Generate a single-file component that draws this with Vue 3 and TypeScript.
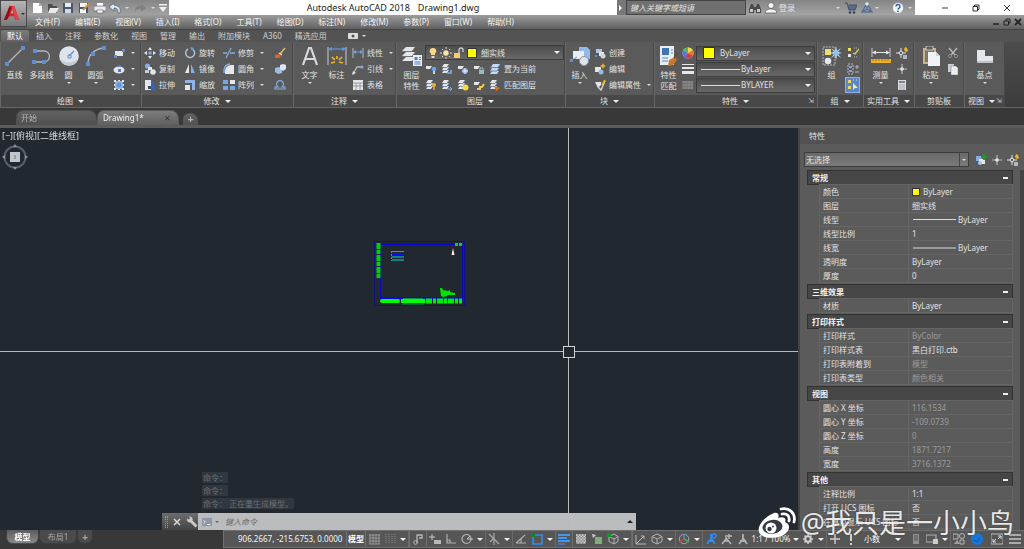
<script setup lang="ts">
import { ref } from 'vue'

interface Small { icon: string; label?: string; arrow?: boolean; active?: boolean }
interface Big { icon: string; label: string[]; arrow?: boolean }
interface Row { name: string; value: string; kind?: 'color' | 'line' | 'weight'; dim?: boolean }
interface Group { title: string; rows: Row[] }
interface StatusItem { icon?: string; arrow?: boolean; sep?: boolean; label: string }

const B = '#86aee2'
const W = '#e4e6ea'
const G = '#b4b8be'
const Y = '#f0b429'

const sheets = (extra: string) =>
  `<path d="M3 1h5L6 4H1zM3 4h5L6 7H1zM3 7h5l-2 3H1z" fill="${W}"/><path d="M1 4.500h5l2-3M1 7.500h5l2-3" fill="none" stroke="#5c7fae" stroke-width=".8"/>${extra}`

const ic: Record<string, string> = {
  line: `<path d="M2 18L18 2" stroke="${G}" stroke-width="1.3"/><path d="M0 16h4v4H0zM16 0h4v4h-4z" fill="#5f8fd0"/>`,
  pline: `<path d="M2 4h10a5.500 5.500 0 0 1 0 11H2" transform="translate(0 1)" fill="none" stroke="${G}" stroke-width="1.300"/><path d="M0 14h4v4H0zM10 14h4v4h-4zM1 3h4v4H1z" fill="#5f8fd0"/>`,
  circle: `<circle cx="10" cy="10" r="9.800" fill="#dfe4ec"/><path d="M1 13a9.500 9.500 0 0 0 18 0a14 14 0 0 1-18 0" fill="#c3cbd8"/><path d="M10 10l5-5" stroke="#5f8fd0" stroke-width="1.200"/><path d="M9 9h3v3H9z" fill="none" stroke="#5f8fd0"/>`,
  arc: `<path d="M2 18C2 9 8 3 18 2" fill="none" stroke="${G}" stroke-width="1.300"/><path d="M0 16h4v4H0zM5 6h4v4H5zM16 0h4v4h-4z" fill="#5f8fd0"/>`,
  rect: `<path d="M2 4h8v5H2z" fill="${W}"/><path d="M1 8h3v3H1zM9 2h3v3H9z" fill="#5f8fd0"/>`,
  ellipse: `<ellipse cx="6" cy="7" rx="5.500" ry="3.500" fill="${W}"/><path d="M5 6h3v3H5zM5 2h3v2H5z" fill="#4f7fc4"/>`,
  hatch: `<path d="M2 2h8v8H2z" fill="#8fb4e8"/><circle cx="6" cy="6" r="2.500" fill="#6a96d6"/><path d="M1 1h2v2H1zM9 1h2v2H9zM1 9h2v2H1zM9 9h2v2H9zM5 1h2v1H5zM5 10h2v1H5zM1 5h1v2H1zM10 5h1v2h-1z" fill="${W}"/>`,
  move: `<path d="M6 0l2 3H4zM6 12l2-3H4zM0 6l3-2v4zM12 6L9 4v4z" fill="${W}"/><path d="M4.500 4.500h3v3h-3z" fill="${B}"/>`,
  rotate: `<path d="M9 2.500A4.500 4.500 0 1 1 4 2" fill="none" stroke="#aebfd8" stroke-width="1.500"/><path d="M6 0l4 1-2 3z" fill="#6f9ad6"/>`,
  trim: `<path d="M0 6h4M7 6h5" stroke="${B}" stroke-width="1.400"/><path d="M3 11L8 1" stroke="${B}" stroke-width="1.200"/>`,
  copy: `<circle cx="3.500" cy="3" r="2.600" fill="${B}"/><path d="M4 4h4v3H4z" fill="${W}"/><circle cx="9" cy="9" r="2.800" fill="${W}"/><path d="M1 7h4v3H1z" fill="#c4cfe0"/>`,
  mirror: `<path d="M5 1v9H1z" fill="${W}"/><path d="M7 1l4 9H7z" fill="${B}"/>`,
  fillet: `<path d="M2 11V8a6 6 0 0 1 6-6h3v9z" fill="${W}"/><path d="M1 10V7a6 6 0 0 1 6-6" fill="none" stroke="${B}" stroke-width="1.400"/>`,
  stretch: `<path d="M1 1h6v10H1z" fill="${W}"/><path d="M7 1h1l4 10H7z" fill="#2e67b8"/><path d="M4 7h3v3H4z" fill="#3b4a5e"/>`,
  scale: `<path d="M1 1h10v10H8V4H1z" fill="#8eb3e4"/><path d="M1 6h5v5H1z" fill="${W}"/>`,
  array: `<path d="M0 1h5v4H0zM0 7h5v4H0zM7 7h5v4H7z" fill="#79a5e3"/><path d="M7 1h5v4H7z" fill="${W}"/>`,
  erase: `<path d="M11 1L6 7" stroke="#e0b070" stroke-width="1.600"/><path d="M1 8l4-1 2 2-2 2H1z" fill="#d9622e"/><path d="M5 6l3 2" stroke="#f2dcb4" stroke-width="1.400"/>`,
  explode: `<path d="M1 5l4-1 3 2v4l-4 1-3-2z" fill="#9dbde8"/><path d="M6 2l3-1 3 1v4l-3 2-3-2z" fill="#dbe6f5"/>`,
  offset: `<path d="M1 10V8h3a3.500 3.500 0 1 1 4 0h3v2z" fill="none" stroke="${B}" stroke-width="1.200"/>`,
  text: `<path d="M3 19L9 2h2l6 17M6 13h8" fill="none" stroke="#d6d8dc" stroke-width="2.200"/>`,
  dim: `<path d="M1 1v18M19 1v18" stroke="${G}" stroke-width="1.200"/><path d="M2 3h16" stroke="#5f93dc" stroke-width="1.200"/><path d="M1 3l4-2v4zM19 3l-4-2v4z" fill="#5f93dc"/><path d="M4 17l4-1M16 17l-4-1M10 10v3M5 11l3 3M15 11l-3 3" stroke="${Y}" stroke-width="1.700"/>`,
  linear: `<path d="M1 1v10M11 1v10" stroke="${G}"/><path d="M2 5h8" stroke="#5f93dc" stroke-width="1.300"/><path d="M1 5l3-2v4zM11 5L8 3v4z" fill="#6fa0e6"/>`,
  leader: `<path d="M1 11l4-7h5" fill="none" stroke="${G}" stroke-width="1.300"/><circle cx="10" cy="4" r="1.600" fill="#7ba6e2"/><path d="M0 12l1-4 3 2z" fill="${W}"/>`,
  table: `<path d="M1 1h10v10H1z" fill="${W}"/><path d="M1 4h10M1 7h10M4 4v7M8 4v7" stroke="#858b94" stroke-width=".8"/>`,
  layers: `<path d="M4 1h9l-3 4H0zM4 6h9l-3 4H0zM4 11h9l-3 4H0z" fill="${W}"/><path d="M0 5.500h10l3-4M0 10.500h10l3-4" fill="none" stroke="#777" stroke-width=".8"/><path d="M11 9h9v11h-9z" fill="#e8eef8"/><path d="M12.500 11h3v3h-3z" fill="#4c7cc4"/><path d="M17 11.500h2M17 13.500h2M12.500 16h6M12.500 18h6" stroke="#4c7cc4"/>`,
  bulb: `<path d="M6 1a3 3 0 0 1 2 5.500V8H4V6.500A3 3 0 0 1 6 1z" fill="#f6d888"/><path d="M4.500 9h3v2h-3z" fill="#d8d8d8"/>`,
  sun: `<circle cx="6" cy="6" r="2.700" fill="#fae7a5"/><path d="M6 0v2M6 10v2M0 6h2M10 6h2M2 2l1.200 1.200M9 9l1.200 1.200M2 10l1.200-1.200M9 3l1.200-1.200" stroke="#e3d8b8"/>`,
  lock: `<path d="M1 6h6v5H1z" fill="#f2cf6a"/><path d="M6 6V3a2 2 0 0 1 4 0v2" fill="none" stroke="#d0d0d0" stroke-width="1.300"/>`,
  ly1: `<path d="M1 3h6l-2 3H1z" fill="${W}"/><circle cx="9" cy="6" r="2.300" fill="#6fa4ea"/><path d="M8 8h2v3H8z" fill="#c8d4e4"/>`,
  ly2: sheets(`<path d="M6 10h4V7" stroke="${B}" stroke-width="1.600" fill="none"/>`),
  ly3: `<path d="M1 3h6l-2 3H1z" fill="${W}"/><circle cx="8" cy="8" r="2.800" fill="#91b9f0"/><path d="M8 5v6M5 8h6" stroke="#fff" stroke-width=".7"/>`,
  ly4: `<path d="M1 3h6l-2 3H1z" fill="${W}"/><path d="M6 7h5v4H6z" fill="#9bbdb7"/><path d="M7 7V5h3v2" fill="none" stroke="${G}"/>`,
  ly5: `<path d="M4 1h7L9 4H2zM3 5h7L8 8H1zM3 8h7l-2 3H1z" fill="#c8d8ee"/><path d="M1 4.500h8l2-3M1 8h7l2-3" fill="none" stroke="#5c8ccc"/>`,
  ly6: sheets(`<circle cx="9" cy="6" r="2" fill="${Y}"/><path d="M8 8h2v3H8z" fill="#db8b2f"/>`),
  ly7: sheets(`<path d="M6 10h5M9 8l2 2-2 2" stroke="${B}" fill="none"/>`),
  ly8: sheets(`<circle cx="8.500" cy="8.500" r="3" fill="#f7d946"/>`),
  ly9: `<path d="M1 3h6l-2 3H1z" fill="${W}"/><path d="M6 8h3l2-3" stroke="#f2c94c" stroke-width="2" fill="none"/><path d="M4 9h4v2H4z" fill="#f2c94c"/>`,
  ly10: sheets(`<path d="M5 7l6 2-4 3z" fill="#d8742a"/>`),
  insert: `<path d="M9 1h8l3 3v9H9z" fill="#93b9e6"/><path d="M3 5h11v8H3z" fill="#e9ecf1"/><circle cx="14" cy="15" r="4.500" fill="#dfe4ea" stroke="#8b95a5"/><path d="M0 13h3v3H0z" fill="#5f8fd0"/><path d="M2 14l5-3" stroke="#5f8fd0"/>`,
  create: `<path d="M2 2h6v4H2z" fill="#aac6ea"/><path d="M5 5h5v4H5z" fill="${W}"/><circle cx="9" cy="9" r="2.500" fill="#cfd6e0"/><path d="M1 8h2v2H1z" fill="#5f8fd0"/>`,
  bedit: `<path d="M1 4h6v5H1z" fill="${W}"/><circle cx="7" cy="9" r="2.500" fill="#9ab9e2"/><path d="M9 0l1 2 2 1-2 1-1 2-1-2-2-1 2-1z" fill="${Y}"/>`,
  attedit: `<path d="M1 3h6v3l-3 3z" fill="${W}"/><path d="M4 8l3 3 4-9" fill="none" stroke="#c9ced6" stroke-width="1.500"/><path d="M8 6l3-5" stroke="${Y}" stroke-width="1.600"/>`,
  matchprop: `<path d="M1 0h14v19H1z" fill="#e9edf4"/><path d="M3 2h7v7H3z" fill="#3f75b8"/><path d="M12 4h2M12 7h2M3 12h6M3 15h6" stroke="#6289bd"/><path d="M10 14l6-3 2 3-4 5-5 1z" fill="#c77a2c"/><path d="M15 12l4-5" stroke="#704a2a" stroke-width="2"/>`,
  wheel: `<circle cx="6" cy="6" r="5.500" fill="#e8e8e8"/><path d="M6 6V.5A5.500 5.500 0 0 1 10.800 3.300z" fill="#f5d44b"/><path d="M6 6l4.800-2.700a5.500 5.500 0 0 1 0 5.500z" fill="#e57a2e"/><path d="M6 6l4.800 2.800A5.500 5.500 0 0 1 6 11.500z" fill="#d23b3b"/><path d="M6 6v5.500A5.500 5.500 0 0 1 1.200 8.800z" fill="#8b4fc0"/><path d="M6 6L1.200 8.800a5.500 5.500 0 0 1 0-5.500z" fill="#3d80d8"/><path d="M6 6L1.200 3.300A5.500 5.500 0 0 1 6 .5z" fill="#4fb35a"/>`,
  weights: `<path d="M0 1.500h12" stroke="${W}"/><path d="M0 5h12" stroke="${W}" stroke-width="2"/><path d="M0 9.500h12" stroke="${W}" stroke-width="3"/>`,
  ltype: `<path d="M1 2h10v8H1z" fill="#777"/><path d="M0 3h12M0 6h12M0 9h12" stroke="#989898" stroke-dasharray="2 1"/>`,
  group: `<path d="M1 1h12v18H1z" fill="none" stroke="${G}" stroke-dasharray="2 1"/><path d="M3 3h6v6H3z" fill="#f1dc6e"/><circle cx="6" cy="15" r="3.300" fill="#e2e7ee"/><path d="M14 0l1 5 4-3-3 4 4 1-4 1 3 4-4-3-1 5-1-5-4 3 3-4-5-1 5-1-3-4 4 3z" fill="#bfe0fb"/><circle cx="14" cy="7" r="2.500" fill="#8cc4f5"/>`,
  ungroup: `<path d="M1 1h3v3H1z" fill="#f1dc6e"/><path d="M1 7h3v3H1z" fill="${W}"/><path d="M7 1h4M7 10h3" stroke="${G}" stroke-dasharray="1 1"/><path d="M6 6l2 1 4-5" stroke="#e8cf4c" fill="none" stroke-width="1.300"/>`,
  gedit: `<path d="M1 1h5v10H1z" fill="none" stroke="${G}" stroke-dasharray="2 1"/><path d="M2 3h3v2H2zM2 7h3v2H2z" fill="#7ba6e2"/><path d="M8 4h4M10 2v4M8 9h4" stroke="${G}"/>`,
  gsel: `<path d="M1 1h3v3H1zM1 7h3v3H1z" fill="#e2d56c"/><path d="M6 1h1M9 1h1" stroke="#cde"/><path d="M6 4l5 5-3 0-2 2z" fill="#f4e9a0"/>`,
  measure: `<path d="M1 2v9M19 2v9" stroke="${G}" stroke-width="1.200"/><path d="M2 6.500h16" stroke="${W}"/><path d="M1 6.500l4-2v4zM19 6.500l-4-2v4z" fill="${W}"/><path d="M0 13h20v4H0z" fill="#edb024"/><path d="M2 13v2M5 13v2M8 13v2M11 13v2M14 13v2M17 13v2" stroke="#93660a" stroke-width=".7"/>`,
  qselect: `<path d="M5 1v10M0 6h10" stroke="${W}"/><circle cx="5" cy="6" r="1.800" fill="#5b5b5b" stroke="${W}"/><path d="M9 0l2 1 1 3-2 1-2-2z" fill="${Y}"/><path d="M7 8h4v4H7z" fill="${G}"/>`,
  point: `<path d="M6 1v10M1 6h10" stroke="${G}" stroke-width="1.200"/><circle cx="6" cy="6" r="1.800" fill="${W}"/>`,
  calc: `<path d="M2 1h8v10H2z" fill="#d9dce0"/><path d="M3 2h6v2H3z" fill="#7c8590"/><path d="M3 6h6M3 8h6M3 10h6" stroke="#8a8f97" stroke-width=".7"/>`,
  paste: `<path d="M2 2h13v16H2z" fill="#c9b28c"/><path d="M4 4h9v12H4z" fill="#7d766a"/><path d="M5 0h7v4H5z" fill="#5e5e5e" stroke="#ddd" stroke-width=".8"/><path d="M7 6h8l4 4v10H7z" fill="#f0f2f5"/><path d="M15 6v4h4" fill="#cfd4dc"/>`,
  cut: `<path d="M2 1l6 7M10 1L4 8" stroke="${G}" stroke-width="1.400"/><circle cx="3" cy="9" r="1.600" fill="none" stroke="#8c8c8c"/><circle cx="9" cy="9" r="1.600" fill="none" stroke="#8c8c8c"/>`,
  cclip: `<path d="M1 1h6v8H1z" fill="#c9ccd2"/><path d="M4 3h5l2 2v7H4z" fill="#eceef1" stroke="#777" stroke-width=".5"/>`,
  base: `<path d="M2 4h8v6h8v7H2z" fill="#e4e6ea"/><path d="M2 15h16v2H2z" fill="#bfc3c9"/>`,
  new: `<path d="M2 1h6l3 3v7H2z" fill="#fff"/><path d="M8 1v3h3" fill="#aaa"/>`,
  open: `<path d="M1 2h4l1 2h4v7H1z" fill="#4d4d4d"/><path d="M3 6h9l-3 5H1z" fill="#e9ecef"/>`,
  save: `<path d="M1 1h10v10H1z" fill="#46566b"/><path d="M3 1h6v4H3z" fill="#e8ecf2"/><path d="M3 7h6v4H3z" fill="#d4dae3"/>`,
  saveas: `<path d="M1 1h9v10H1z" fill="#46566b"/><path d="M2 1h7v4H2z" fill="#f4f4f4"/><path d="M2 7h6v4H2z" fill="#fff"/><path d="M5 8l6-6" stroke="#e08a2c" stroke-width="1.800"/>`,
  print: `<path d="M3 1h6v4H3z" fill="#fff"/><path d="M0 4h12v5H0z" fill="#e9ebee" stroke="#555" stroke-width=".6"/><path d="M3 8h6v3H3z" fill="#fff" stroke="#555" stroke-width=".6"/>`,
  undo: `<path d="M5 1L0 5l5 4V6c3 0 4 1 4 5h2c1-5-1-7-6-8z" fill="#dfe8f5" stroke="#4f5d72" stroke-width=".7"/>`,
  redo: `<path d="M7 2l5 4-5 4V7c-4 0-5 0-6 3-1-4 2-6 6-6z" fill="#808080"/>`,
  more: `<path d="M2 2h8v1.500H2zM2 5h8L6 10z" fill="#f2f2f2"/>`,
  bino: `<path d="M2 2h2l1 3v6H0V7zM8 2h2l2 5v4H7V5zM5 5h2v3H5z" fill="#4a4a4a"/><path d="M1 7h3v3H1zM8 7h3v3H8z" fill="#ccc"/>`,
  user: `<circle cx="6" cy="3.500" r="3" fill="#f4f4f4" stroke="#555" stroke-width=".7"/><path d="M0 11c1-4 3-3 4-4h4c1 1 3 0 4 4z" fill="#f4f4f4" stroke="#555" stroke-width=".7"/>`,
  cart: `<path d="M0 1h2l2 7h6l2-5H4" fill="#5b6a86" stroke="#40506c" stroke-width="1"/><circle cx="5" cy="10.500" r="1.300" fill="#34425c"/><circle cx="9" cy="10.500" r="1.300" fill="#34425c"/>`,
  a360: `<path d="M6 1l5 9H1zM6 1v6M1 10l5-3 5 3" fill="none" stroke="#55709c" stroke-width="1.300"/><circle cx="6" cy="2" r="1.800" fill="#dfe7f2"/>`,
  help: `<circle cx="6" cy="6" r="5.500" fill="#f2f5fa" stroke="#888" stroke-width=".6"/><path d="M4 4.500a2 2 0 1 1 2.800 1.800Q6 6.700 6 7.500" fill="none" stroke="#2c5ca8" stroke-width="1.400"/><circle cx="6" cy="9.300" r=".9" fill="#2c5ca8"/>`,
  wrench: `<path d="M1 2.500l2 1 1-1-1-2a3 3 0 0 1 3.500 4L11.500 9.500l-2 2-5-5A3 3 0 0 1 1 2.500z" fill="#c9c9c9"/>`,
  prompt: `<path d="M0 1h12v10H0z" fill="#8d97a6"/><path d="M2 4l2 2-2 2M6 9h4" stroke="#fff" fill="none"/>`,
  addsel: `<path d="M1 2h6v5H1z" fill="#86aee2"/><path d="M4 5h6v5H4z" fill="${W}"/><circle cx="5" cy="9" r="2" fill="#a9c6ec"/><path d="M9 0v6M6 3h6" stroke="#1e9a2a" stroke-width="1.800"/>`,
  grid: `<path d="M2 1v10M5 1v10M8 1v10M11 1v10M1 2h11M1 5h11M1 8h11M1 11h11" stroke="#a4a4a4" stroke-width=".8"/>`,
  snap: `<path d="M2 1v10M5 1v10M8 1v10M11 1v10" stroke="#909090" stroke-dasharray="1 1"/>`,
  infer: `<path d="M5 10V2h5v3H7" fill="none" stroke="#b8b8b8" stroke-width="1.300"/><circle cx="3.500" cy="9.500" r="1.800" fill="none" stroke="#b8b8b8"/>`,
  dyn: `<path d="M3 1v6M0 4h6" stroke="#c8c8c8"/><path d="M5 7h7v4H5z" fill="#b8b8b8"/>`,
  ortho: `<path d="M2 1v9h9M2 7h3v3" fill="none" stroke="#b0b0b0" stroke-width="1.200"/>`,
  polar: `<circle cx="5.500" cy="6" r="4.500" fill="none" stroke="#b8b8b8" stroke-width="1.200"/><path d="M6 6h6M6 6l3-3" stroke="#c8c8c8"/>`,
  iso: `<path d="M1 1l10 10M6 0v12M2 9l3-3" stroke="#aaa" stroke-width="1.200"/>`,
  otrack: `<path d="M1 10L10 2M1 10h10M6 6v4" stroke="#b0b0b0" stroke-width="1.100" fill="none"/>`,
  osnap: `<path d="M2 2h9v9H2z" fill="none" stroke="#2f8cf0" stroke-width="1.600"/><path d="M0 0h4v4H0z" fill="#0a8a22"/>`,
  lw: `<path d="M0 2h12M0 5h9M0 8h12" stroke="#3f97f4" stroke-width="1.800"/><path d="M0 11h7" stroke="#3f97f4"/>`,
  transp: `<path d="M1 1h10v10H1z" fill="#8a8a8a"/><path d="M1 2h10M1 5h10M1 8h10" stroke="#ccc" stroke-dasharray="1.500 1.500" stroke-width="1.500"/><path d="M2.500 3.500h9M2.500 6.500h9M2.500 9.500h9" stroke="#ccc" stroke-dasharray="1.500 1.500" stroke-width="1.500"/>`,
  cycle: `<path d="M4 4h7v7H4z" fill="#83ad78"/><path d="M1 1l4 1-3 3z" fill="#ccc"/>`,
  cube: `<path d="M6 1l5 2.500v5L6 11 1 8.500v-5zM1 3.500L6 6l5-2.500M6 6v5" fill="none" stroke="#b4b4b4"/>`,
  osnap3: `<path d="M7 1l4 2.500v5L7 11 2 8.500v-5zM2 3.500L7 6l4-2.500M7 6v5" fill="none" stroke="#b4b4b4"/><path d="M0 0h4v4H0z" fill="#0a9a22"/>`,
  ucs: `<path d="M1 2v9h10M1 11l8-8M6 3h3v3" fill="none" stroke="#b8b8b8"/>`,
  gizmo: `<circle cx="6" cy="6" r="4.700" fill="none" stroke="#a8a8a8"/><path d="M6 1v5" stroke="#5a8ddd" stroke-width="1.500"/><path d="M6 6l-5 3" stroke="#c84343" stroke-width="1.500"/><path d="M6 6l5 3" stroke="#48a84e" stroke-width="1.500"/>`,
  anno: `<path d="M6 1v5l-4 5M6 5l4 6M3 8h6" fill="none" stroke="#2f8cf0" stroke-width="1.900"/><circle cx="9" cy="3" r="2" fill="none" stroke="#2f8cf0" stroke-width="1.400"/>`,
  anno2: `<path d="M5 2v4l-4 5M5 5l5 6M3 8h5M8 1v5M6 3h5" fill="none" stroke="#b6b6b6" stroke-width="1.400"/>`,
  anno3: `<path d="M6 1v5l-4 5M6 5l4 6M3 8h6" fill="none" stroke="#b0b0b0" stroke-width="1.800"/>`,
  gear: `<circle cx="6" cy="6" r="2.800" fill="none" stroke="#d0d0d0" stroke-width="2"/><path d="M6 1v2M6 9v2M1 6h2M9 6h2M2.500 2.500l1.500 1.500M8 8l1.500 1.500M9.500 2.500L8 4M4 8L2.500 9.500" stroke="#d0d0d0" stroke-width="1.500"/>`,
  plus: `<path d="M6 1v10M1 6h10" stroke="#cfcfcf" stroke-width="1.400"/>`,
  excl: `<path d="M6 1v7M6 10v2" stroke="#cfcfcf" stroke-width="2"/>`,
  quick: `<path d="M3 1h6v10H3z" fill="#8f8f8f"/><path d="M4 3h4M4 5h4M4 7h4" stroke="#555"/>`,
  lockui: `<path d="M0 2h10v7H0z" fill="none" stroke="#b0b0b0" stroke-width="1.200"/><path d="M7 6h5v5H7z" fill="#ccc"/>`,
  isolate: `<path d="M0 1h5v5H0zM7 7h4v4H7z" fill="none" stroke="#b8b8b8"/><circle cx="9" cy="3" r="2.500" fill="none" stroke="#b8b8b8"/><path d="M4 7l3 4H1z" fill="#a0a0a0"/>`,
  perf: `<circle cx="6" cy="6" r="6" fill="#1677d8"/><path d="M3 7l3 2 3-4" stroke="#0d4f9c" fill="none"/>`,
  clean: `<path d="M0 1h12v10H0z" fill="none" stroke="#b8b8b8"/><path d="M2 9V6M2 9h3M2 9l3-3M10 3v3M10 3H7M10 3L7 6" stroke="#ddd" fill="none"/>`,
  menu: `<path d="M0 2h12M0 6h12M0 10h12" stroke="#c8c8c8" stroke-width="1.400"/>`,
}

const quick = ['new', 'open', 'save', 'saveas', 'print', 'undo']
const menus = ['文件(F)', '编辑(E)', '视图(V)', '插入(I)', '格式(O)', '工具(T)', '绘图(D)', '标注(N)', '修改(M)', '参数(P)', '窗口(W)', '帮助(H)']
const tabs = ['默认', '插入', '注释', '参数化', '视图', '管理', '输出', '附加模块', 'A360', '精选应用']
const activeTab = ref('默认')

const drawBig: Big[] = [
  { icon: 'line', label: ['直线'] }, { icon: 'pline', label: ['多段线'] },
  { icon: 'circle', label: ['圆'], arrow: true }, { icon: 'arc', label: ['圆弧'], arrow: true },
]
const drawSmall: Small[] = [{ icon: 'rect', arrow: true }, { icon: 'ellipse', arrow: true }, { icon: 'hatch', arrow: true }]
const modify: Small[] = [
  { icon: 'move', label: '移动' }, { icon: 'copy', label: '复制' }, { icon: 'stretch', label: '拉伸' },
  { icon: 'rotate', label: '旋转' }, { icon: 'mirror', label: '镜像' }, { icon: 'scale', label: '缩放' },
  { icon: 'trim', label: '修剪', arrow: true }, { icon: 'fillet', label: '圆角', arrow: true }, { icon: 'array', label: '阵列', arrow: true },
  { icon: 'erase' }, { icon: 'explode' }, { icon: 'offset' },
]
const annoBig: Big[] = [{ icon: 'text', label: ['文字'], arrow: true }, { icon: 'dim', label: ['标注'] }]
const annoSmall: Small[] = [{ icon: 'linear', label: '线性', arrow: true }, { icon: 'leader', label: '引线', arrow: true }, { icon: 'table', label: '表格' }]
const layerRows: Small[][] = [
  [{ icon: 'ly1' }, { icon: 'ly2' }, { icon: 'ly3' }, { icon: 'ly4' }, { icon: 'ly5', label: '置为当前' }],
  [{ icon: 'ly6' }, { icon: 'ly7' }, { icon: 'ly8' }, { icon: 'ly9' }, { icon: 'ly10', label: '匹配图层' }],
]
const blockSmall: Small[] = [{ icon: 'create', label: '创建' }, { icon: 'bedit', label: '编辑' }, { icon: 'attedit', label: '编辑属性', arrow: true }]
const groupSmall: Small[] = [{ icon: 'ungroup' }, { icon: 'gedit' }, { icon: 'gsel', active: true }]
const utilSmall: Small[] = [{ icon: 'qselect' }, { icon: 'point' }, { icon: 'calc' }]
const clipSmall: Small[] = [{ icon: 'cut' }, { icon: 'cclip' }]

const groups: Group[] = [
  { title: '常规', rows: [
    { name: '颜色', value: 'ByLayer', kind: 'color' }, { name: '图层', value: '细实线' },
    { name: '线型', value: 'ByLayer', kind: 'line' }, { name: '线型比例', value: '1' },
    { name: '线宽', value: 'ByLayer', kind: 'weight' }, { name: '透明度', value: 'ByLayer' }, { name: '厚度', value: '0' },
  ] },
  { title: '三维效果', rows: [{ name: '材质', value: 'ByLayer' }] },
  { title: '打印样式', rows: [
    { name: '打印样式', value: 'ByColor', dim: true }, { name: '打印样式表', value: '黑白打印.ctb' },
    { name: '打印表附着到', value: '模型', dim: true }, { name: '打印表类型', value: '颜色相关', dim: true },
  ] },
  { title: '视图', rows: [
    { name: '圆心 X 坐标', value: '116.1534', dim: true }, { name: '圆心 Y 坐标', value: '-109.0739', dim: true },
    { name: '圆心 Z 坐标', value: '0', dim: true }, { name: '高度', value: '1871.7217', dim: true }, { name: '宽度', value: '3716.1372', dim: true },
  ] },
  { title: '其他', rows: [
    { name: '注释比例', value: '1:1' }, { name: '打开 UCS 图标', value: '否' }, { name: '在原点显示 UCS 图标', value: '否' },
  ] },
]

const arrow: StatusItem = { arrow: true, label: '更多' }
const status: StatusItem[] = [
  { icon: 'grid', label: '栅格' }, { icon: 'snap', label: '捕捉' }, arrow,
  { icon: 'infer', label: '推断约束', sep: true }, { icon: 'dyn', label: '动态输入', sep: true },
  { icon: 'ortho', label: '正交' }, { icon: 'polar', label: '极轴' }, arrow,
  { icon: 'iso', label: '等轴测' }, arrow, { icon: 'otrack', label: '对象追踪' },
  { icon: 'osnap', label: '对象捕捉' }, arrow, { icon: 'lw', label: '线宽' },
  { icon: 'transp', label: '透明度', sep: true }, { icon: 'cycle', label: '选择循环' },
  { icon: 'osnap3', label: '三维捕捉' }, arrow, { icon: 'ucs', label: '动态 UCS', sep: true },
  { icon: 'cube', label: '选择过滤' }, arrow, { icon: 'gizmo', label: '小控件' }, arrow,
  { icon: 'anno', label: '注释可见性' }, { icon: 'anno2', label: '自动缩放' }, { icon: 'anno3', label: '注释比例' },
]
const search = ref('')
const command = ref('')
</script>

<template>
  <div class="app">
    <header class="head">
      <button class="logo" aria-label="应用程序菜单">
        <svg class="mark" viewBox="0 0 18 18">
          <path d="M1 16L7 1h5l5 15h-4l-1-4H7l-3 4z" fill="#d3232b" />
          <path d="M1 16L7 1l2 1-3 10-2 4z" fill="#8e1118" />
          <path d="M8 9l2-5 1 5z" fill="#a9a9a9" />
          <path d="M12 1l5 15h-3L9 2z" fill="#e9424a" />
        </svg>
        <i class="tri dark"></i>
      </button>
      <div class="titlebar">
        <div class="quick">
          <button v-for="q in quick" :key="q" :aria-label="q"><svg class="i12" viewBox="0 0 12 12" v-html="ic[q]"></svg></button>
          <i class="tri"></i>
          <button aria-label="redo" class="redo"><svg class="i12" viewBox="0 0 12 12" v-html="ic.redo"></svg></button>
          <i class="tri"></i>
          <button aria-label="自定义"><svg class="i12" viewBox="0 0 12 12" v-html="ic.more"></svg></button>
        </div>
        <h1 class="title"><span>Autodesk AutoCAD 2018</span><span>Drawing1.dwg</span></h1>
        <div class="info">
          <button class="expand" aria-label="展开"><i class="tri right"></i></button>
          <input v-model="search" class="search" type="text" placeholder="键入关键字或短语" aria-label="搜索">
          <button aria-label="查找"><svg class="i12" viewBox="0 0 12 12" v-html="ic.bino"></svg></button>
          <button class="login"><svg class="i12" viewBox="0 0 12 12" v-html="ic.user"></svg>登录</button>
          <i class="tri"></i>
          <button aria-label="商店"><svg class="i12" viewBox="0 0 12 12" v-html="ic.cart"></svg></button>
          <button aria-label="A360"><svg class="i12" viewBox="0 0 12 12" v-html="ic.a360"></svg></button>
          <i class="tri"></i>
          <button aria-label="帮助" class="help"><svg class="i12" viewBox="0 0 12 12" v-html="ic.help"></svg></button>
          <i class="tri"></i>
        </div>
        <div class="window">
          <button aria-label="最小化"><svg class="i8" viewBox="0 0 8 8"><path d="M1 4h6" stroke="#333" /></svg></button>
          <button aria-label="还原"><svg class="i8" viewBox="0 0 8 8"><path d="M1 2.500h4.500V7H1zM2.500 2.500V1H7v4.500H5.500" fill="none" stroke="#333" /></svg></button>
          <button aria-label="关闭"><svg class="i8" viewBox="0 0 8 8"><path d="M1 1l6 6M7 1L1 7" stroke="#333" /></svg></button>
        </div>
      </div>
      <nav class="menubar">
        <button v-for="m in menus" :key="m">{{ m }}</button>
        <span class="docs">
          <button aria-label="最小化文档"><svg class="i8" viewBox="0 0 8 8"><path d="M1 6h6" stroke="#222" stroke-width="1.500" /></svg></button>
          <button aria-label="还原文档"><svg class="i8" viewBox="0 0 8 8"><path d="M1 3h4.500v4H1zM3 3V1h4v4H5.500" fill="none" stroke="#222" /></svg></button>
          <button aria-label="关闭文档"><svg class="i8" viewBox="0 0 8 8"><path d="M1 1l6 6M7 1L1 7" stroke="#222" stroke-width="1.800" /></svg></button>
        </span>
      </nav>
    </header>

    <nav class="tabs">
      <button v-for="t in tabs" :key="t" :class="{ on: t === activeTab }" @click="activeTab = t">{{ t }}</button>
      <button class="cam" aria-label="最小化功能区"><svg viewBox="0 0 10 6"><rect width="10" height="6" rx="1" fill="#ddd" /><circle cx="5" cy="3" r="1.500" fill="#555" /></svg><i class="tri"></i></button>
    </nav>

    <div class="ribbon">
      <section class="panel p-draw">
        <div class="body">
          <button v-for="b in drawBig" :key="b.icon" class="big"><svg viewBox="0 0 20 20" v-html="ic[b.icon]"></svg><span v-for="l in b.label" :key="l">{{ l }}</span><i v-if="b.arrow" class="tri"></i></button>
          <div class="col"><button v-for="s in drawSmall" :key="s.icon" class="small" :aria-label="s.icon"><svg class="i12" viewBox="0 0 12 12" v-html="ic[s.icon]"></svg><i class="tri"></i></button></div>
        </div>
        <footer>绘图<i class="tri cap"></i></footer>
      </section>
      <section class="panel p-modify">
        <div class="body">
          <div class="cols"><button v-for="s in modify" :key="s.icon" class="small" :aria-label="s.icon"><svg class="i12" viewBox="0 0 12 12" v-html="ic[s.icon]"></svg><span v-if="s.label">{{ s.label }}</span><i v-if="s.arrow" class="tri"></i></button></div>
        </div>
        <footer>修改<i class="tri cap"></i></footer>
      </section>
      <section class="panel p-anno">
        <div class="body">
          <button v-for="b in annoBig" :key="b.icon" class="big"><svg viewBox="0 0 20 20" v-html="ic[b.icon]"></svg><span v-for="l in b.label" :key="l">{{ l }}</span><i v-if="b.arrow" class="tri"></i></button>
          <div class="col"><button v-for="s in annoSmall" :key="s.icon" class="small"><svg class="i12" viewBox="0 0 12 12" v-html="ic[s.icon]"></svg><span>{{ s.label }}</span><i v-if="s.arrow" class="tri"></i></button></div>
        </div>
        <footer>注释<i class="tri cap"></i></footer>
      </section>
      <section class="panel p-layer">
        <div class="body">
          <button class="big"><svg viewBox="0 0 20 20" v-html="ic.layers"></svg><span>图层</span><span>特性</span></button>
          <div class="col grow">
            <div class="combo">
              <svg v-for="n in ['bulb', 'sun', 'lock']" :key="n" class="i12" viewBox="0 0 12 12" v-html="ic[n]"></svg>
              <b class="swatch"></b>
              <select aria-label="当前图层"><option>细实线</option></select><i class="tri cap"></i>
            </div>
            <div v-for="(r, i) in layerRows" :key="i" class="line"><button v-for="s in r" :key="s.icon" class="small" :aria-label="s.label || s.icon"><svg class="i12" viewBox="0 0 12 12" v-html="ic[s.icon]"></svg><span v-if="s.label">{{ s.label }}</span></button></div>
          </div>
        </div>
        <footer>图层<i class="tri cap"></i></footer>
      </section>
      <section class="panel p-block">
        <div class="body">
          <button class="big"><svg viewBox="0 0 20 20" v-html="ic.insert"></svg><span>插入</span><i class="tri"></i></button>
          <div class="col"><button v-for="s in blockSmall" :key="s.icon" class="small"><svg class="i12" viewBox="0 0 12 12" v-html="ic[s.icon]"></svg><span>{{ s.label }}</span><i v-if="s.arrow" class="tri"></i></button></div>
        </div>
        <footer>块<i class="tri cap"></i></footer>
      </section>
      <section class="panel p-prop">
        <div class="body">
          <button class="big"><svg viewBox="0 0 20 20" v-html="ic.matchprop"></svg><span>特性</span><span>匹配</span></button>
          <div class="col grow">
            <div class="proprow"><svg class="i12" viewBox="0 0 12 12" v-html="ic.wheel"></svg><div class="combo"><b class="swatch"></b><select aria-label="对象颜色"><option>ByLayer</option></select><i class="tri cap"></i></div></div>
            <div class="proprow"><svg class="i12" viewBox="0 0 12 12" v-html="ic.weights"></svg><div class="combo"><b class="rule"></b><select aria-label="线宽"><option>ByLayer</option></select><i class="tri cap"></i></div></div>
            <div class="proprow"><svg class="i12" viewBox="0 0 12 12" v-html="ic.ltype"></svg><div class="combo"><b class="rule"></b><select aria-label="线型"><option>BYLAYER</option></select><i class="tri cap"></i></div></div>
          </div>
        </div>
        <footer>特性<i class="tri cap"></i><span class="launch">⇲</span></footer>
      </section>
      <section class="panel p-group">
        <div class="body">
          <button class="big"><svg viewBox="0 0 20 20" v-html="ic.group"></svg><span>组</span></button>
          <div class="col"><button v-for="s in groupSmall" :key="s.icon" class="small" :class="{ active: s.active }" :aria-label="s.icon"><svg class="i12" viewBox="0 0 12 12" v-html="ic[s.icon]"></svg></button></div>
        </div>
        <footer>组<i class="tri cap"></i></footer>
      </section>
      <section class="panel p-util">
        <div class="body">
          <button class="big"><svg viewBox="0 0 20 20" v-html="ic.measure"></svg><span>测量</span><i class="tri"></i></button>
          <div class="col"><button v-for="s in utilSmall" :key="s.icon" class="small" :aria-label="s.icon"><svg class="i12" viewBox="0 0 12 12" v-html="ic[s.icon]"></svg></button></div>
        </div>
        <footer>实用工具<i class="tri cap"></i></footer>
      </section>
      <section class="panel p-clip">
        <div class="body">
          <button class="big"><svg viewBox="0 0 20 20" v-html="ic.paste"></svg><span>粘贴</span><i class="tri"></i></button>
          <div class="col"><button v-for="s in clipSmall" :key="s.icon" class="small" :aria-label="s.icon"><svg class="i12" viewBox="0 0 12 12" v-html="ic[s.icon]"></svg></button></div>
        </div>
        <footer>剪贴板</footer>
      </section>
      <section class="panel p-view">
        <div class="body">
          <button class="big"><svg viewBox="0 0 20 20" v-html="ic.base"></svg><span>基点</span><i class="tri"></i></button>
        </div>
        <footer>视图<i class="tri cap"></i><span class="launch">⇲</span></footer>
      </section>
    </div>

    <div class="files">
      <button class="file">开始</button>
      <button class="file on"><span>Drawing1*</span><span class="x">✕</span></button>
      <button class="file add" aria-label="新图形">+</button>
    </div>

    <main class="main">
      <div class="canvas">
        <p class="viewlabel">[−][俯视][二维线框]</p>
        <svg class="viewcube" viewBox="0 0 26 26">
          <circle cx="13" cy="13" r="10.500" fill="none" stroke="#57606c" stroke-width="2" />
          <path d="M13 0l2 3h-4zM13 26l2-3h-4zM0 13l3-2v4zM26 13l-3-2v4z" fill="#8d949c" />
          <path d="M8 8h10v10H8z" fill="#c2c5c9" /><path d="M13 11v4" stroke="#777" />
        </svg>
        <svg class="drawing" viewBox="0 0 92 66">
          <path d="M.5.5h90v64H.5z" fill="none" stroke="#10108c" />
          <path d="M7 3h82" stroke="#0a0ad0" stroke-width="2" /><path d="M88.500 3v57M6.500 3v57" stroke="#0a0ac0" />
          <path d="M7 57h82" stroke="#0a0ae0" stroke-width="2" />
          <path d="M4.500 2v36" stroke="#00d000" stroke-width="4" stroke-dasharray="6 1 4 1" />
          <path d="M81 3.500h8" stroke="#00e000" stroke-width="3" stroke-dasharray="3 1" />
          <path d="M17 10.500h13" stroke="#8c8c30" /><path d="M18 13h12" stroke="#1010f0" stroke-width="2" />
          <path d="M18 16h12M18 19h12" stroke="#129a9a" stroke-width="1.500" /><path d="M17.500 10v10" stroke="#18b830" stroke-dasharray="2 1" />
          <path d="M79 7l1.500 7h-3z" fill="#f2f2f2" /><path d="M79 7v2" stroke="#c02020" />
          <path d="M66 47h2l1 2 5 1 2-1v2l5 1v2h-7l-1 1-4 1-2-1z" fill="#00e400" />
          <path d="M8 60h16" stroke="#00ff00" stroke-width="4" stroke-linecap="round" />
          <path d="M27 60h24" stroke="#00ff00" stroke-width="4" /><path d="M29 57.500h20M28 63h22" stroke="#068a50" />
          <path d="M52 60h36" stroke="#00ee00" stroke-width="5" stroke-dasharray="6 1 3 1" />
        </svg>
        <i class="cross v"></i><i class="cross h"></i><i class="pick"></i>
        <div class="console">
          <div class="history"><span>命令：</span><span>命令：</span><span>命令： 正在重生成模型。</span></div>
          <div class="cmd">
            <div class="grip">
              <i class="dots"></i>
              <button aria-label="关闭命令行"><svg class="i8" viewBox="0 0 8 8"><path d="M1 1l6 6M7 1L1 7" stroke="#d8d8d8" stroke-width="1.500" /></svg></button>
              <button aria-label="自定义"><svg class="i12" viewBox="0 0 12 12" v-html="ic.wrench"></svg></button>
            </div>
            <svg class="i12 pr" viewBox="0 0 12 12" v-html="ic.prompt"></svg><i class="tri mid"></i>
            <input v-model="command" type="text" placeholder="键入命令" aria-label="命令">
            <i class="tri up"></i>
          </div>
        </div>
      </div>
      <aside class="palette">
        <h2>特性</h2>
        <div class="pick-row">
          <div class="combo"><select aria-label="选择对象"><option>无选择</option></select><span class="drop"><i class="tri"></i></span></div>
          <button v-for="n in ['addsel', 'point', 'qselect']" :key="n" :aria-label="n"><svg class="i12" viewBox="0 0 12 12" v-html="ic[n]"></svg></button>
        </div>
        <div class="groups">
          <section v-for="g in groups" :key="g.title">
            <h3>{{ g.title }}<button :aria-label="'折叠' + g.title"></button></h3>
            <table><tbody>
              <tr v-for="r in g.rows" :key="r.name" :class="{ dim: r.dim }">
                <th scope="row">{{ r.name }}</th>
                <td><div><b v-if="r.kind === 'color'" class="swatch"></b><b v-else-if="r.kind" class="rule" :class="r.kind"></b>{{ r.value }}</div></td>
              </tr>
            </tbody></table>
          </section>
        </div>
      </aside>
    </main>

    <div class="bottom">
      <div class="layouts">
        <button class="lay on">模型</button><button class="lay">布局1</button><button class="lay add" aria-label="新建布局">+</button>
      </div>
      <div class="status">
        <span class="coords">906.2667, -215.6753, 0.0000</span>
        <button class="model">模型</button>
        <button v-for="(s, i) in status" :key="i" :class="[s.arrow ? 'more' : 'tool', { sep: s.sep }]" :aria-label="s.label"><i v-if="s.arrow" class="tri cap"></i><svg v-else class="i12" viewBox="0 0 12 12" v-html="ic[s.icon!]"></svg></button>
        <button class="scale">1:1 / 100%<i class="tri cap"></i></button>
        <button class="tool" aria-label="工作空间"><svg class="i12" viewBox="0 0 12 12" v-html="ic.gear"></svg></button>
        <button class="more" aria-label="更多"><i class="tri cap"></i></button>
        <button class="tool" aria-label="注释监视器"><svg class="i12" viewBox="0 0 12 12" v-html="ic.plus"></svg></button>
        <button class="tool" aria-label="单位"><svg class="i12" viewBox="0 0 12 12" v-html="ic.excl"></svg></button>
        <div class="units"><select aria-label="图形单位"><option>小数</option></select><i class="tri cap"></i></div>
        <button class="tool" aria-label="快捷特性"><svg class="i12" viewBox="0 0 12 12" v-html="ic.quick"></svg></button>
        <button class="tool" aria-label="锁定用户界面"><svg class="i12" viewBox="0 0 12 12" v-html="ic.lockui"></svg></button>
        <button class="more" aria-label="更多"><i class="tri cap"></i></button>
        <button class="tool" aria-label="隔离对象"><svg class="i12" viewBox="0 0 12 12" v-html="ic.isolate"></svg></button>
        <button class="tool wide" aria-label="图形性能"><svg class="i12" viewBox="0 0 12 12" v-html="ic.perf"></svg></button>
        <button class="tool wide" aria-label="全屏显示"><svg class="i12" viewBox="0 0 12 12" v-html="ic.clean"></svg></button>
        <button class="tool" aria-label="自定义"><svg class="i12" viewBox="0 0 12 12" v-html="ic.menu"></svg></button>
      </div>
    </div>

    <div class="mark-line">
      <svg viewBox="0 0 40 34">
        <path d="M15 8c5-3 8 0 6 4 5-2 9 0 7 4 5 2 5 6 2 10-5 6-19 8-26 3C-2 24 4 13 15 8z" fill="#fff" />
        <ellipse cx="15.500" cy="21" rx="10" ry="7" fill="#343a41" transform="rotate(-8 15 21)" />
        <circle cx="14" cy="22" r="5.500" fill="#fff" /><circle cx="12.500" cy="23" r="2.200" fill="#343a41" /><circle cx="16" cy="20.500" r="1" fill="#343a41" />
        <path d="M25 8c5-1 8 2 7 7M24 3c9-2 15 5 13 13" fill="none" stroke="#fff" stroke-width="2.800" stroke-linecap="round" />
      </svg>
      <span>@我只是一小小鸟</span>
    </div>
  </div>
</template>

<style>
body { background: #383838; }
</style>

<style scoped>
.app { position: relative; display: flex; flex-direction: column; height: 100vh; overflow: hidden; background: #383838; color: #e2e2e2; font: 8px/12px "Noto Sans", "Noto Sans CJK SC", sans-serif; }
.app * { box-sizing: border-box; }
button, input, select { font: inherit; color: inherit; background: none; border: 0; padding: 0; margin: 0; white-space: nowrap; }
button { display: flex; align-items: center; justify-content: center; }
select { appearance: none; min-width: 0; flex: 1; outline: 0; }
svg { display: block; flex: none; }
h1, h2, h3, p { margin: 0; font: inherit; }
.i12 { width: 12px; height: 12px; }
.i8 { width: 8px; height: 8px; }
.tri { flex: none; width: 0; height: 0; border: 2px solid transparent; border-top-color: #dcdcdc; border-bottom: 0; }
.tri.cap { border-width: 3px 3px 0; border-top-color: #efefef; }
.tri.dark { border-top-color: #333; }
.tri.mid { border-top-color: #666; }
.tri.right { border: 3px solid transparent; border-left-color: #fff; border-right: 0; }
.tri.up { border: 3px solid transparent; border-bottom-color: #222; border-top: 0; }

.head { display: grid; grid-template: 15px 14px / 27px 1fr; background: #5a5a5a; }
.logo { grid-row: 1 / 3; height: 27px; gap: 1px; background: linear-gradient(#b5b5b5, #7a7a7a); border: 1px solid #4a4a4a; }
.mark { width: 17px; height: 19px; }
.titlebar { display: flex; background: #fff; }
.quick { display: flex; align-items: center; width: 142px; padding-left: 2px; background: linear-gradient(#858585, #a2a2a2); }
.quick button { width: 16px; }
.quick .tri { margin: 0 2px; }
.quick .redo { width: 18px; }
.quick .redo + .tri + button { width: 12px; }
.title { flex: 1; display: flex; justify-content: center; gap: 8px; color: #222; font-size: 9px; line-height: 15px; white-space: nowrap; }
.info { display: flex; align-items: center; width: 298px; background: linear-gradient(#858585, #a5a5a5); }
.info button { width: 16px; }
.info .expand { width: 9px; height: 15px; background: #777; }
.search { width: 120px; height: 15px; padding: 0 3px; background: #707070; border: 1px solid #444; font-style: italic; margin-right: 1px; }
.search::placeholder, .cmd input::placeholder { color: inherit; opacity: 1; }
.info .login { flex: 1; gap: 2px; justify-content: flex-start; padding-left: 2px; }
.info .help { width: 20px; margin-left: 6px; }
.info .tri { margin-right: 3px; }
.window { display: flex; width: 109px; padding-left: 14px; }
.window button { width: 31px; }
.menubar { display: flex; align-items: center; gap: 15px; padding-left: 8px; background: linear-gradient(#9c9c9c, #606060); color: #f4f4f4; }
.docs { display: flex; gap: 3px; margin-left: auto; padding-right: 2px; }

.tabs { display: flex; gap: 1px; height: 13px; padding-left: 1px; background: #535353; color: #cfcfcf; border-top: 1px solid #444; }
.tabs button { padding: 0 6px; }
.tabs .on { background: linear-gradient(#7b7b7b, #626262); color: #fff; border-radius: 2px 2px 0 0; }
.tabs .cam { gap: 4px; margin-left: 8px; }
.cam svg { width: 10px; height: 6px; }

.ribbon { display: flex; height: 66px; background: linear-gradient(#4c4c4c, #3c3c3c); border-bottom: 1px solid #666; }
.panel { display: flex; flex-direction: column; border-right: 1px solid #484848; border-left: 1px solid #666; background: #5a5a5a; }
.p-draw { width: 141px; } .p-modify { width: 152px; } .p-anno { width: 103px; } .p-layer { width: 169px; }
.p-block { width: 89px; } .p-prop { width: 163px; } .p-group { width: 46px; } .p-util { width: 51px; } .p-clip { width: 50px; } .p-view { width: 41px; }
.panel .body { flex: 1; display: flex; padding: 3px 0 2px; min-height: 0; }
.panel footer { display: flex; align-items: center; justify-content: center; gap: 5px; height: 12px; background: #484848; position: relative; white-space: nowrap; }
.launch { position: absolute; right: 2px; color: #c8c8c8; font-size: 7px; }
.big { flex-direction: column; justify-content: flex-start; width: 27px; }
.big svg { width: 20px; height: 20px; margin: 1px 0 3px; }
.big span { line-height: 11px; }
.big .tri { margin-top: 2px; }
.col { display: grid; grid-template-rows: repeat(3, 1fr); margin-left: 4px; }
.col.grow { flex: 1; min-width: 0; }
.small { justify-content: flex-start; gap: 3px; }
.small .tri { margin-left: 3px; }
.cols { display: grid; grid-template-rows: repeat(3, 1fr); grid-auto-flow: column; grid-template-columns: 40px 39px 51px 12px; padding-left: 2px; }
.p-anno .body { padding-left: 2px; }
.p-anno .col { margin-left: 2px; }
.p-layer .body { padding-left: 1px; }
.p-layer .col { margin-left: 0; }
.p-layer .line { display: flex; gap: 4px; }
.p-layer .combo { gap: 1px; padding-left: 1px; }
.p-layer .swatch { margin-left: 1px; }
.combo { display: flex; align-items: center; height: 15px; background: linear-gradient(#4d4d4d, #686868); border: 1px solid #3c3c3c; padding-right: 3px; min-width: 0; }
.swatch { flex: none; width: 10px; height: 10px; background: #ff0; border: 1px solid #333; margin-right: 3px; }
.p-block .col { margin-left: 1px; }
.p-prop .col { margin-left: 0; padding-right: 1px; }
.proprow { display: flex; align-items: center; gap: 2px; }
.proprow .combo { flex: 1; }
.proprow .swatch { margin: 0 5px 0 6px; width: 12px; height: 12px; }
.rule { flex: none; height: 1px; background: #ddd; width: 39px; margin: 0 1px 0 4px; }
.p-group .col { margin-left: 0; }
.p-group .small { width: 15px; justify-content: center; }
.small.active { background: #5b86c8; border: 1px solid #8fb2e6; }
.p-util .big { margin-left: 3px; }
.p-util .col { margin-left: 2px; }
.p-clip .body { padding-left: 2px; }
.p-clip .col { margin-left: 3px; }
.p-view .body { justify-content: center; }
.p-view footer { justify-content: flex-start; padding-left: 3px; }

.files { display: flex; align-items: flex-end; height: 20px; padding-left: 16px; background: #383838; border-bottom: 3px solid #5c5c5c; }
.file { position: relative; z-index: 0; width: 81px; height: 15px; justify-content: flex-start; padding-left: 5px; color: #b5b5b5; }
.file::before, .lay::before { content: ""; position: absolute; z-index: -1; inset: 0; background: linear-gradient(#626262, #505050); border-radius: 6px 8px 0 0; transform: perspective(40px) rotateX(4deg); transform-origin: bottom; }
.file.on { width: 82px; height: 15px; padding: 0 8px 0 6px; justify-content: space-between; color: #f2f2f2; }
.file.on::before { background: linear-gradient(#7d7d7d, #606060); }
.file .x { color: #333; }
.file.add { width: 15px; height: 12px; margin-left: 4px; padding: 0; justify-content: center; font-size: 10px; font-weight: 700; }

.main { flex: 1; display: flex; min-height: 0; }
.canvas { position: relative; flex: 1; background: #212830; overflow: hidden; }
.viewlabel { position: absolute; left: 2px; top: 2px; font-size: 9px; color: #d8dadc; }
.viewcube { position: absolute; left: 2px; top: 16px; width: 26px; height: 26px; }
.drawing { position: absolute; left: 374px; top: 113px; width: 92px; height: 66px; }
.cross { position: absolute; background: #b8babc; z-index: 1; }
.cross.v { left: 568px; top: 0; bottom: 0; width: 1px; }
.cross.h { top: 223px; left: 0; right: 0; height: 1px; }
.pick { position: absolute; z-index: 2; left: 563px; top: 218px; width: 12px; height: 12px; background: #212830; border: 1px solid #d0d2d4; }
.console { position: absolute; left: 162px; bottom: 0; width: 474px; }
.history { display: flex; flex-direction: column; align-items: flex-start; gap: 2px; padding: 0 0 4px 40px; color: #6b7074; }
.history span { line-height: 11px; padding: 0 1px; background: #31373e; border-radius: 1px; }
.cmd { display: flex; align-items: center; height: 17px; background: #bbbcbe; padding-right: 3px; }
.grip { display: flex; align-items: center; gap: 5px; width: 36px; height: 17px; padding-left: 3px; background: linear-gradient(#6d6d6d, #444); }
.dots { width: 3px; height: 12px; border: 1px dotted #999; border-width: 0 1px; }
.pr { width: 10px; height: 10px; margin: 0 3px 0 4px; }
.cmd input { flex: 1; min-width: 0; padding-left: 6px; font-style: italic; color: #6d6e70; }

.palette { width: 226px; display: flex; flex-direction: column; background: #5b5b5b; border-left: 2px solid #444; min-height: 0; }
.palette h2 { height: 16px; line-height: 16px; padding-left: 9px; background: #525252; }
.pick-row { display: flex; align-items: center; gap: 4px; padding: 8px 5px 3px 4px; }
.pick-row .combo { flex: 1; height: 15px; margin-right: 2px; padding: 0 0 0 1px; background: linear-gradient(#696969, #7a7a7a); }
.drop { display: flex; align-items: center; justify-content: center; width: 9px; height: 13px; border-left: 1px solid #444; }
.groups { flex: 1; overflow: hidden; min-height: 0; margin-left: 7px; padding-right: 7px; border-right: 4px solid #444; }
.groups section { margin-bottom: 1px; }
.groups h3 { display: flex; align-items: center; justify-content: space-between; height: 15px; padding: 0 4px; background: #464646; border: 1px solid #333; font-weight: 700; color: #f2f2f2; margin-bottom: -1px; }
.groups h3 button { width: 5px; height: 2px; background: #eee; }
.groups table { width: calc(100% - 12px); margin-left: 12px; border-collapse: collapse; table-layout: fixed; }
.groups tr { height: 14px; }
.groups th, .groups td { padding: 0 3px; height: 14px; line-height: 13px; font-weight: 400; text-align: left; border: 1px solid #656565; white-space: nowrap; }
.groups th { width: 89px; overflow: hidden; }
.groups td div { display: flex; align-items: center; height: 13px; }
.groups .dim td { color: #9c9c9c; }
.groups td .swatch { width: 8px; height: 8px; margin-right: 3px; }
.groups td .rule { width: 43px; margin: 0 2px 0 1px; }
.groups td .rule.weight { height: 2px; background: #999; }

.bottom { display: flex; height: 19px; background: #383838; }
.layouts { display: flex; width: 223px; padding-left: 7px; }
.lay { position: relative; z-index: 0; width: 31px; height: 13px; color: #aaa; }
.lay::before { border-radius: 0 0 6px 6px; background: #4a4a4a; transform-origin: top; }
.lay + .lay { width: 36px; margin-left: 2px; }
.lay.on { color: #fff; font-weight: 700; }
.lay.on::before { background: linear-gradient(#5c5c5c, #8a8a8a); }
.lay.lay.add { width: 14px; font-size: 10px; font-weight: 700; }
.status { flex: 1; display: flex; align-items: center; height: 18px; min-width: 0; padding-right: 1px; background: #565656; border: 1px solid #707070; border-width: 1px 0 1px 1px; }
.coords { width: 122px; padding-left: 14px; color: #f5f5f5; white-space: nowrap; }
.model { width: 20px; height: 16px; border: 1px solid #707070; border-width: 0 1px; font-weight: 700; color: #fff; }
.tool { width: 16px; height: 16px; flex: none; }
.tool.sep { width: 17px; border-left: 1px solid #707070; }
.tool.wide { width: 20px; }
.more { width: 11px; height: 16px; flex: none; border-right: 1px solid #6a6a6a; }
.scale { gap: 3px; width: 49px; color: #f2f2f2; }
.units { flex: 1; display: flex; align-items: center; padding: 0 7px 0 5px; min-width: 0; color: #fff; }

.mark-line { position: absolute; right: 10px; bottom: 8px; display: flex; align-items: center; gap: 4px; color: rgba(255, 255, 255, .88); font-size: 27px; line-height: 36px; pointer-events: none; text-shadow: 0 0 2px rgba(0, 0, 0, .35); z-index: 5; white-space: nowrap; }
.mark-line svg { width: 40px; height: 34px; }
</style>
